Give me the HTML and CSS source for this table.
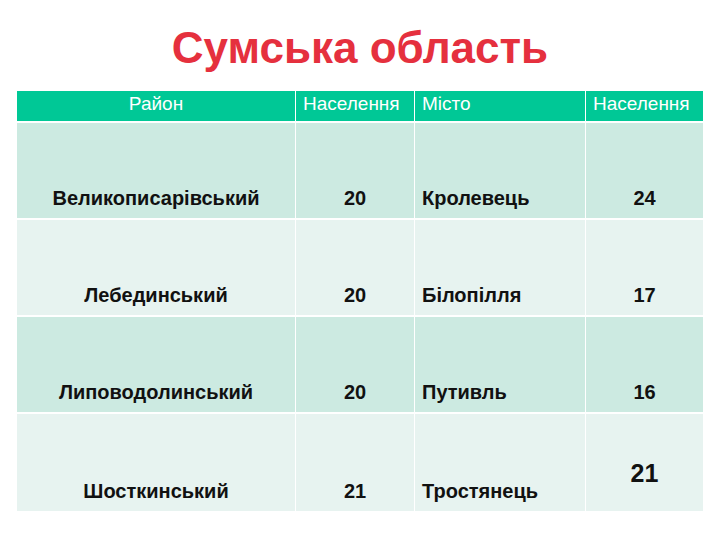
FILE: index.html
```html
<!DOCTYPE html>
<html lang="uk">
<head>
<meta charset="utf-8">
<title>Сумська область</title>
<link rel="stylesheet" href="styles.css">
</head>
<body>
<h1 class="title">Сумська область</h1>
<table class="data">
  <colgroup>
    <col class="c1"><col class="c2"><col class="c3"><col class="c4">
  </colgroup>
  <thead>
    <tr>
      <th class="center">Район</th>
      <th>Населення</th>
      <th>Місто</th>
      <th>Населення</th>
    </tr>
  </thead>
  <tbody>
    <tr class="odd">
      <td class="center">Великописарівський</td>
      <td class="center">20</td>
      <td>Кролевець</td>
      <td class="center">24</td>
    </tr>
    <tr class="even">
      <td class="center">Лебединський</td>
      <td class="center">20</td>
      <td>Білопілля</td>
      <td class="center">17</td>
    </tr>
    <tr class="odd">
      <td class="center">Липоводолинський</td>
      <td class="center">20</td>
      <td>Путивль</td>
      <td class="center">16</td>
    </tr>
    <tr class="even">
      <td class="center">Шосткинський</td>
      <td class="center">21</td>
      <td>Тростянець</td>
      <td class="center big">21</td>
    </tr>
  </tbody>
</table>
</body>
</html>
```
FILE: styles.css
```css
html, body {
  margin: 0;
  padding: 0;
  background: #ffffff;
  font-family: "Liberation Sans", Arial, sans-serif;
}

.title {
  margin: 0;
  padding-top: 23px;
  height: 91px;
  box-sizing: border-box;
  text-align: center;
  font-size: 44px;
  line-height: 50px;
  font-weight: bold;
  color: #e5303e;
}

.data {
  margin-left: 17px;
  margin-top: 0;
  width: 686px;
  table-layout: fixed;
  border-collapse: separate;
  border-spacing: 0;
}

.c1 { width: 279px; }
.c2 { width: 119px; }
.c3 { width: 171px; }
.c4 { width: 117px; }

th, td {
  border-right: 1px solid #ffffff;
  border-bottom: 2px solid #ffffff;
  padding: 0 7px;
  text-align: left;
  white-space: nowrap;
}

th:last-child, td:last-child {
  border-right: none;
}

th {
  background: #00c896;
  color: #ffffff;
  font-weight: normal;
  font-size: 19px;
  height: 32px;
  line-height: 22px;
  padding-bottom: 5px;
  box-sizing: border-box;
  vertical-align: middle;
}

td {
  height: 97px;
  box-sizing: border-box;
  vertical-align: bottom;
  font-size: 20px;
  font-weight: bold;
  color: #111111;
  line-height: 23px;
  padding-bottom: 8px;
}

.center {
  text-align: center;
}

tr.odd td { background: #cceae1; }
tr.even td { background: #e7f3f0; }

tbody tr:last-child td { border-bottom: none; }

td.big {
  font-size: 25px;
  line-height: 28px;
  padding-bottom: 24px;
}
```
